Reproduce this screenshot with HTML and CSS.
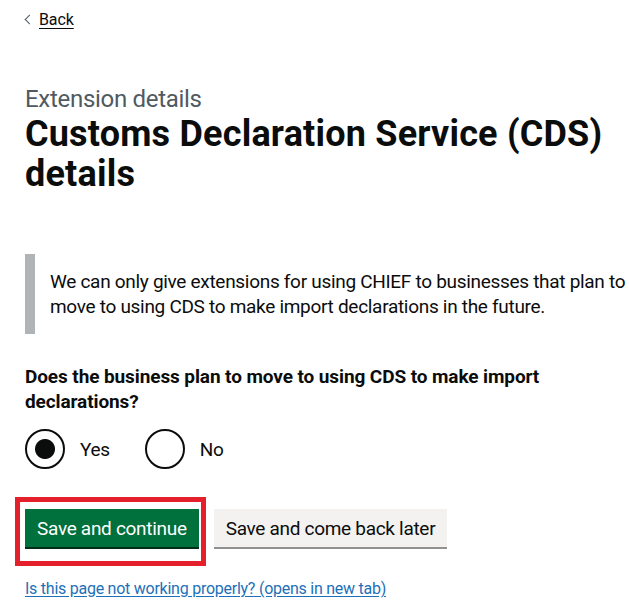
FILE: index.html
```html
<!DOCTYPE html>
<html lang="en">
<head>
  <meta charset="UTF-8">
  <meta name="viewport" content="width=device-width, initial-scale=1.0">
  <title>Customs Declaration Service (CDS) details</title>
  <link rel="stylesheet" href="styles.css">
</head>
<body>

  <div class="page">
    <a href="#" class="back-link">Back</a>

    <main class="main">
      <span class="caption">Extension details</span>
      <h1 class="heading">Customs Declaration Service (CDS) details</h1>

      <div class="inset">
        We can only give extensions for using CHIEF to businesses that plan to move to using CDS to make import declarations in the future.
      </div>

      <form class="form" onsubmit="return false;">
        <fieldset class="fieldset">
          <legend class="legend">Does the business plan to move to using CDS to make import declarations?</legend>
          <div class="radios">
            <label class="radio">
              <input type="radio" name="moveToCds" value="yes" checked>
              <span class="radio-label">Yes</span>
            </label>
            <label class="radio">
              <input type="radio" name="moveToCds" value="no">
              <span class="radio-label">No</span>
            </label>
          </div>
        </fieldset>

        <div class="button-group">
          <span class="highlight">
            <button class="button" type="submit">Save and continue</button>
          </span>
          <button class="button button-secondary" type="submit">Save and come back later</button>
        </div>
      </form>

      <a href="#" class="report-link">Is this page not working properly? (opens in new tab)</a>
    </main>
  </div>

</body>
</html>
```

FILE: styles.css
```css
body {
  margin: 0;
  font-family: Roboto, "Liberation Sans", Arial, sans-serif;
  letter-spacing: -0.3px;
  color: #0b0c0c;
  background-color: #ffffff;
}
.page {
  padding: 10px 0 0 25px;
}
.back-link {
  display: inline-block;
  font-size: 16px;
  line-height: 20px;
  letter-spacing: -0.1px;
  color: #0b0c0c;
  text-decoration: underline;
  text-underline-offset: 3px;
}
.back-link::before {
  content: "";
  display: inline-block;
  width: 6px;
  height: 6px;
  border-left: 1px solid #505a5f;
  border-bottom: 1px solid #505a5f;
  transform: rotate(45deg);
  margin: 0 6px 2px 1px;
}
.main {
  padding-top: 54px;
}
.caption {
  display: block;
  font-size: 24px;
  line-height: 30px;
  color: #505a5f;
}
.heading {
  margin: 0 0 60px;
  font-size: 36px;
  line-height: 40px;
  font-weight: 700;
  letter-spacing: 0.2px;
}
.inset {
  padding: 15px 0 15px 15px;
  border-left: 10px solid #b1b4b6;
  font-size: 19px;
  line-height: 25px;
  margin-bottom: 30px;
}
.form {
  margin: 0;
}
.fieldset {
  margin: 0 0 30px;
  padding: 0;
  border: 0;
}
.legend {
  padding: 0;
  margin-bottom: 15px;
  font-size: 19px;
  line-height: 25px;
  font-weight: 700;
  letter-spacing: -0.1px;
}
.radios {
  display: flex;
}
.radio {
  display: flex;
  align-items: flex-start;
  margin: 0 20px 10px 0;
  cursor: pointer;
}
.radio input {
  appearance: none;
  -webkit-appearance: none;
  box-sizing: border-box;
  width: 40px;
  height: 40px;
  margin: 0;
  border: 2px solid #0b0c0c;
  border-radius: 50%;
  background: #ffffff;
}
.radio input:checked {
  background: radial-gradient(circle, #0b0c0c 0, #0b0c0c 9.5px, #ffffff 10.5px);
}
.radio-label {
  padding: 8px 15px 5px;
  font-size: 19px;
  line-height: 25px;
}
.button-group {
  display: flex;
  align-items: flex-start;
  margin-bottom: 32px;
}
.highlight {
  position: relative;
  display: inline-block;
  margin-right: 15px;
}
.highlight::after {
  content: "";
  position: absolute;
  top: -12px;
  right: -7px;
  bottom: -19px;
  left: -10px;
  border: 5px solid #e3202b;
  pointer-events: none;
}
.button {
  display: block;
  margin: 0;
  padding: 8px 10px 7px;
  border: 2px solid transparent;
  border-radius: 0;
  background-color: #00703c;
  box-shadow: 0 2px 0 #002d18;
  color: #ffffff;
  font-family: inherit;
  font-size: 19px;
  line-height: 19px;
  letter-spacing: -0.3px;
  cursor: pointer;
}
.button-secondary {
  background-color: #f3f2f1;
  box-shadow: 0 2px 0 #929191;
  color: #0b0c0c;
}
.report-link {
  display: inline-block;
  font-size: 16px;
  line-height: 20px;
  letter-spacing: -0.25px;
  color: #1d70b8;
  text-decoration: underline;
  text-underline-offset: 2px;
}
```
